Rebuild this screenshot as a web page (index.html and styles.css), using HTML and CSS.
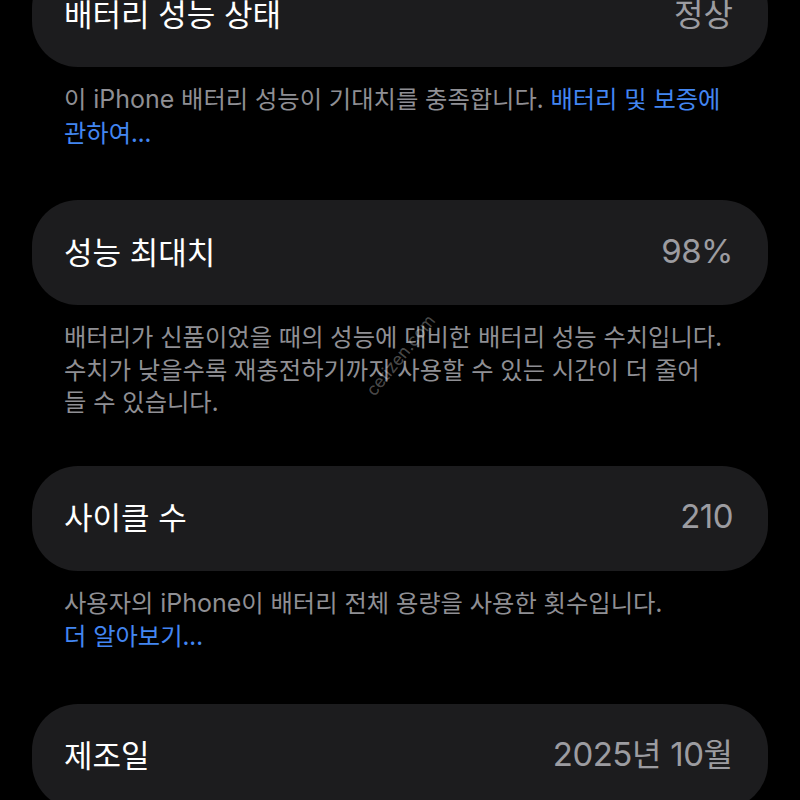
FILE: index.html
```html
<!DOCTYPE html>
<html lang="ko">
<head>
<meta charset="utf-8">
<title>배터리 성능 상태</title>
<link rel="stylesheet" href="styles.css">
</head>
<body>
<main class="page">
  <section class="group first">
    <div class="card">
      <span class="label">배터리 성능 상태</span>
      <span class="value">정상</span>
    </div>
    <p class="footer">이 <span class="en">iPhone</span> 배터리 성능이 기대치를 충족합니다. <a class="link">배터리 및 보증에<br>관하여...</a></p>
  </section>

  <section class="group">
    <div class="card">
      <span class="label">성능 최대치</span>
      <span class="value"><span class="num">98%</span></span>
    </div>
    <p class="footer tight">배터리가 신품이었을 때의 성능에 대비한 배터리 성능 수치입니다.<br>수치가 낮을수록 재충전하기까지 사용할 수 있는 시간이 더 줄어<br>들 수 있습니다.</p>
  </section>

  <section class="group">
    <div class="card">
      <span class="label">사이클 수</span>
      <span class="value"><span class="num">210</span></span>
    </div>
    <p class="footer">사용자의 <span class="en">iPhone</span>이 배터리 전체 용량을 사용한 횟수입니다.<br><a class="link">더 알아보기...</a></p>
  </section>

  <section class="group">
    <div class="card">
      <span class="label">제조일</span>
      <span class="value"><span class="num">2025</span>년 <span class="num">10</span>월</span>
    </div>
  </section>

  <span class="watermark">cetizen.com</span>
</main>
</body>
</html>
```

FILE: styles.css
```css
html, body {
  margin: 0;
  padding: 0;
  background: #000;
}

body {
  width: 800px;
  height: 800px;
  overflow: hidden;
  font-family: Inter, "Noto Sans CJK KR", sans-serif;
  -webkit-font-smoothing: antialiased;
}

.page {
  position: relative;
  padding: 0 32px;
}

.group {
  display: flex;
  flex-direction: column;
}

.group.first {
  margin-top: -38px;
}

.card {
  height: 105px;
  box-sizing: border-box;
  background: #1c1c1e;
  border-radius: 46px;
  display: flex;
  align-items: center;
  justify-content: space-between;
  padding: 0 35px 5px 32px;
}

.label {
  color: #ffffff;
  font-family: "Noto Sans CJK KR", sans-serif;
  font-size: 31px;
  line-height: 1;
  white-space: nowrap;
}

.value {
  color: #9c9ca1;
  font-family: "Noto Sans CJK KR", sans-serif;
  font-size: 32px;
  line-height: 1;
  white-space: nowrap;
}

.num {
  font-family: Inter, sans-serif;
  font-size: 33px;
  letter-spacing: -0.5px;
}

.footer {
  margin: 0 0 52px;
  padding: 15px 32px 0;
  color: #8f8f94;
  font-family: "Noto Sans CJK KR", sans-serif;
  font-size: 24.3px;
  line-height: 32.5px;
  white-space: nowrap;
}

.footer.tight {
  margin-bottom: 48px;
}

.en {
  font-family: Inter, sans-serif;
  font-size: 25px;
}

.link {
  color: #4386f2;
}

.watermark {
  position: absolute;
  left: 362px;
  top: 425px;
  font-family: Inter, sans-serif;
  font-size: 17px;
  color: rgba(255, 255, 255, 0.3);
  transform: rotate(-51deg);
  transform-origin: left top;
  white-space: nowrap;
}
```
